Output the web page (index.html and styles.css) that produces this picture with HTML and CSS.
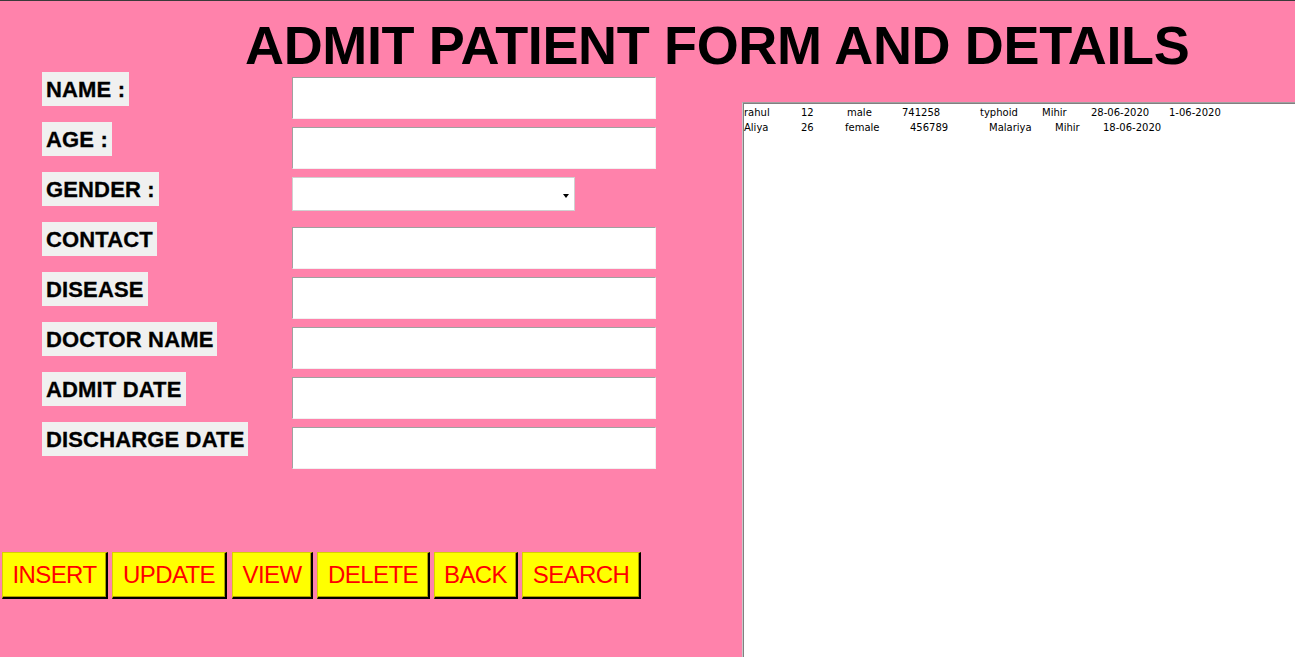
FILE: index.html
```html
<!DOCTYPE html>
<html>
<head>
<meta charset="utf-8">
<title>Admit Patient</title>
<link rel="stylesheet" href="styles.css">
</head>
<body>
<div class="page">
  <div class="header">
    <h1 class="title">ADMIT PATIENT FORM AND DETAILS</h1>
  </div>
  <div class="left">
    <div class="form">
      <div class="row"><span class="label">NAME :</span><div class="entry"></div></div>
      <div class="row"><span class="label">AGE :</span><div class="entry"></div></div>
      <div class="row"><span class="label">GENDER :</span><div class="combo"><span class="arrow"></span></div></div>
      <div class="row"><span class="label">CONTACT</span><div class="entry"></div></div>
      <div class="row"><span class="label">DISEASE</span><div class="entry"></div></div>
      <div class="row"><span class="label">DOCTOR NAME</span><div class="entry"></div></div>
      <div class="row"><span class="label">ADMIT DATE</span><div class="entry"></div></div>
      <div class="row"><span class="label">DISCHARGE DATE</span><div class="entry"></div></div>
    </div>
    <div class="buttons">
      <button class="btn b-insert">INSERT</button>
      <button class="btn b-update">UPDATE</button>
      <button class="btn b-view">VIEW</button>
      <button class="btn b-delete">DELETE</button>
      <button class="btn b-back">BACK</button>
      <button class="btn b-search">SEARCH</button>
    </div>
  </div>
  <div class="listbox">
    <div class="lrow r1">
      <span>rahul</span><span>12</span><span>male</span><span>741258</span><span>typhoid</span><span>Mihir</span><span>28-06-2020</span><span>1-06-2020</span>
    </div>
    <div class="lrow r2">
      <span>Aliya</span><span>26</span><span>female</span><span>456789</span><span>Malariya</span><span>Mihir</span><span>18-06-2020</span>
    </div>
  </div>
</div>
</body>
</html>
```

FILE: styles.css
```css
* { box-sizing: border-box; }
html, body { margin: 0; padding: 0; }
body {
  background: #ff82ab;
  font-family: "Liberation Sans", Arial, sans-serif;
  overflow: hidden;
}
.page {
  height: 657px;
  border-top: 1px solid #3a3a3a;
  display: grid;
  grid-template-columns: 742px 1fr;
  grid-template-rows: 71px 1fr;
}
.header {
  grid-column: 1 / 3;
  padding-top: 17px;
  padding-left: 245px;
}
.title {
  margin: 0;
  font-size: 54px;
  line-height: 54px;
  font-weight: bold;
  letter-spacing: -0.35px;
  color: #000;
  white-space: nowrap;
}
.left {
  display: flex;
  flex-direction: column;
}
.form {
  padding-left: 42px;
  display: flex;
  flex-direction: column;
}
.row {
  height: 50px;
  display: grid;
  grid-template-columns: 250px auto;
  align-items: start;
  justify-items: start;
}
.label {
  background: #f0f0f0;
  font-size: 22px;
  font-weight: bold;
  line-height: 34px;
  height: 34px;
  padding: 1px 4px 0 4px;
  color: #000;
  letter-spacing: 0.15px;
  white-space: nowrap;
  -webkit-text-stroke: 0.3px #000;
}
.entry {
  margin-top: 5px;
  width: 364px;
  height: 42px;
  background: #fff;
  border-top: 1px solid #a0a0a0;
  border-left: 1px solid #a0a0a0;
  border-right: 1px solid #f0f0f0;
  border-bottom: 1px solid #f0f0f0;
}
.combo {
  margin-top: 5px;
  width: 283px;
  height: 34px;
  background: #fff;
  border: 1px solid #d0d0d0;
  display: flex;
  align-items: center;
  justify-content: flex-end;
  padding-right: 5px;
}
.arrow {
  width: 0;
  height: 0;
  border-left: 3.5px solid transparent;
  border-right: 3.5px solid transparent;
  border-top: 4px solid #000;
  margin-top: 3px;
}
.buttons {
  margin-top: 80px;
  padding-left: 2px;
  display: flex;
  gap: 4px;
}
.btn {
  height: 47px;
  padding: 0;
  background: #ffff00;
  color: #ff0000;
  font-family: "Liberation Sans", Arial, sans-serif;
  font-size: 24px;
  letter-spacing: -0.6px;
  border-top: 1px solid #d8d000;
  border-left: 1px solid #d8d000;
  border-right: 2px solid #000;
  border-bottom: 2px solid #000;
  box-shadow: inset -1px -1px 0 #b0a000;
  cursor: default;
}
.b-insert { width: 106px; }
.b-update { width: 115px; }
.b-view { width: 81px; margin-left: 1px; }
.b-delete { width: 113px; }
.b-back { width: 84px; }
.b-search { width: 119px; }
.listbox {
  margin-top: 30px;
  background: #fff;
  border-top: 1px solid #a0a0a0;
  border-left: 1px solid #c8c8c8;
  box-shadow: inset 1px 1px 0 #808080;
  padding: 2px 0 0 1px;
  font-family: "DejaVu Sans", Tahoma, sans-serif;
  font-size: 10px;
  color: #000;
}
.lrow {
  display: flex;
  height: 15px;
  line-height: 15px;
  white-space: nowrap;
}
.lrow span { flex: none; }
.r1 span:nth-child(1) { width: 57px; }
.r1 span:nth-child(2) { width: 46px; }
.r1 span:nth-child(3) { width: 55px; }
.r1 span:nth-child(4) { width: 78px; }
.r1 span:nth-child(5) { width: 62px; }
.r1 span:nth-child(6) { width: 49px; }
.r1 span:nth-child(7) { width: 78px; }
.r2 span:nth-child(1) { width: 57px; }
.r2 span:nth-child(2) { width: 44px; }
.r2 span:nth-child(3) { width: 65px; }
.r2 span:nth-child(4) { width: 79px; }
.r2 span:nth-child(5) { width: 66px; }
.r2 span:nth-child(6) { width: 48px; }
```
